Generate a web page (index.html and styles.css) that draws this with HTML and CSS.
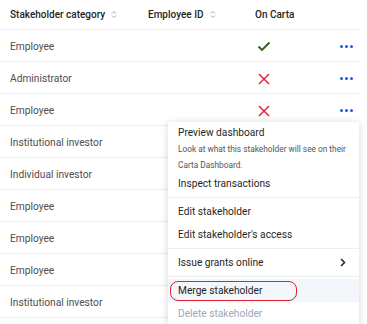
FILE: index.html
```html
<!DOCTYPE html>
<html lang="en">
<head>
    <meta charset="UTF-8">
    <meta name="viewport" content="width=device-width, initial-scale=1.0">
    <title>Stakeholders</title>
    <link rel="stylesheet" href="styles.css">
</head>
<body>
    <div class="page">
        <div class="table">
            <div class="row head">
                <div class="cell">Stakeholder category <svg class="sort" width="6" height="9" viewBox="0 0 6 9"><path d="M1 3.5L3 1.5L5 3.5M1 5.5L3 7.5L5 5.5" fill="none" stroke="#9aa0a8" stroke-width="0.9"/></svg></div>
                <div class="cell">Employee ID <svg class="sort" width="6" height="9" viewBox="0 0 6 9"><path d="M1 3.5L3 1.5L5 3.5M1 5.5L3 7.5L5 5.5" fill="none" stroke="#9aa0a8" stroke-width="0.9"/></svg></div>
                <div class="cell">On Carta</div>
                <div class="cell"></div>
            </div>

            <div class="row">
                <div class="cell">Employee</div>
                <div class="cell"></div>
                <div class="cell"><svg class="yes" width="14" height="11" viewBox="0 0 14 11"><path d="M1.5 5.5L5 9L12.5 1.5" fill="none" stroke="#2f5a1c" stroke-width="1.8"/></svg></div>
                <div class="cell more"><span></span><span></span><span></span></div>
            </div>
            <div class="row">
                <div class="cell">Administrator</div>
                <div class="cell"></div>
                <div class="cell"><svg class="no" width="12" height="12" viewBox="0 0 12 12"><path d="M1 1L11 11M11 1L1 11" fill="none" stroke="#d9283b" stroke-width="1.5"/></svg></div>
                <div class="cell more"><span></span><span></span><span></span></div>
            </div>
            <div class="row">
                <div class="cell">Employee</div>
                <div class="cell"></div>
                <div class="cell"><svg class="no" width="12" height="12" viewBox="0 0 12 12"><path d="M1 1L11 11M11 1L1 11" fill="none" stroke="#d9283b" stroke-width="1.5"/></svg></div>
                <div class="cell more"><span></span><span></span><span></span></div>
            </div>
            <div class="row"><div class="cell">Institutional investor</div></div>
            <div class="row"><div class="cell">Individual investor</div></div>
            <div class="row"><div class="cell">Employee</div></div>
            <div class="row"><div class="cell">Employee</div></div>
            <div class="row"><div class="cell">Employee</div></div>
            <div class="row"><div class="cell">Institutional investor</div></div>
        </div>

        <!-- row actions menu, opened from the third row -->
        <div class="menu">
            <div class="group">
                <div class="item tall">
                    <div class="title">Preview dashboard</div>
                    <div class="desc">Look at what this stakeholder will see on their Carta Dashboard.</div>
                </div>
                <div class="item">Inspect transactions</div>
            </div>
            <div class="group">
                <div class="item">Edit stakeholder</div>
                <div class="item">Edit stakeholder's access</div>
            </div>
            <div class="group">
                <div class="item">Issue grants online
                    <svg class="chev" width="6" height="9" viewBox="0 0 6 9"><path d="M1 1L4.5 4.5L1 8" fill="none" stroke="#222" stroke-width="1.5"/></svg>
                </div>
            </div>
            <div class="group">
                <div class="item active"><span class="ring">Merge stakeholder</span></div>
                <div class="item disabled">Delete stakeholder</div>
            </div>
        </div>
    </div>
</body>
</html>
```

FILE: styles.css
```css
* {
    margin: 0;
    padding: 0;
    box-sizing: border-box;
}

body {
    font-family: Roboto, 'Noto Sans', sans-serif;
    color: #222;
    background-color: #fff;
    overflow: hidden;
    height: 324px;
}

.page {
    position: relative;
    width: 359px;
}

.row {
    display: grid;
    grid-template-columns: 138px 107px 1fr 40px;
    align-items: center;
    height: 32px;
    padding-left: 10px;
    border-bottom: 1px solid #eceef1;
    font-size: 10.2px;
    color: #4d4d4d;
}

.row .cell {
    padding-top: 2px;
}

.row.head {
    height: 30px;
    font-weight: 500;
    font-size: 10px;
    color: #1f1f1f;
}

.row.head .cell {
    padding-top: 0;
}

.cell {
    display: flex;
    align-items: center;
    white-space: nowrap;
}

.sort {
    margin-left: 6px;
}

.yes {
    margin-left: 2px;
}

.no {
    margin-left: 3px;
}

.more {
    justify-content: flex-end;
    gap: 2px;
    padding-right: 6px;
}

.more span {
    width: 3px;
    height: 3px;
    border-radius: 50%;
    background-color: #1d5bd6;
}

.menu {
    position: absolute;
    left: 168px;
    top: 122px;
    width: 191px;
    background-color: #fff;
    box-shadow: 0 1px 8px rgba(0, 0, 0, 0.16);
    font-size: 10.2px;
    color: #1f1f1f;
}

.group {
    padding: 2px 0;
    border-bottom: 1px solid #eceef1;
}

.group:last-child {
    border-bottom: none;
}

.item {
    display: flex;
    align-items: center;
    justify-content: space-between;
    height: 23px;
    padding: 0 13px 0 10px;
}

.item.tall {
    display: block;
    height: 48px;
    padding-top: 2px;
    padding-right: 8px;
}

.title {
    line-height: 14px;
}

.desc {
    font-size: 8.3px;
    line-height: 16px;
    color: #555;
    margin-top: 1px;
}

.item.active {
    background-color: #f3f6fa;
    padding-left: 2px;
}

.ring {
    display: block;
    width: 127px;
    height: 20px;
    line-height: 18px;
    padding-left: 7px;
    border: 1.5px solid #e3212f;
    border-radius: 8px;
}

.item.disabled {
    color: #9ea8b5;
}
```
